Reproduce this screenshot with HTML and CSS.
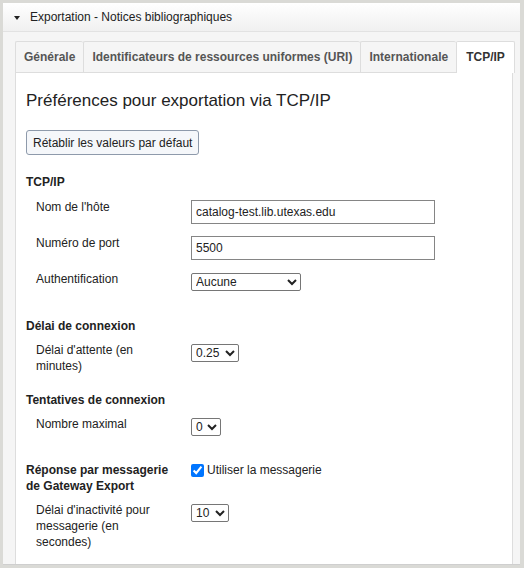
FILE: index.html
```html
<!DOCTYPE html>
<html lang="fr">
<head>
  <meta charset="UTF-8">
  <title>Exportation - Notices bibliographiques</title>
  <link rel="stylesheet" href="styles.css">
</head>
<body>
  <div class="panel">
    <div class="panel-header">
      <span class="caret"></span>
      <span>Exportation - Notices bibliographiques</span>
    </div>

    <div class="panel-body">
      <ul class="tabs">
        <li class="tab">Générale</li>
        <li class="tab">Identificateurs de ressources uniformes (URI)</li>
        <li class="tab">Internationale</li>
        <li class="tab active">TCP/IP</li>
      </ul>

      <div class="tab-content">
        <h2>Préférences pour exportation via TCP/IP</h2>
        <button class="btn">Rétablir les valeurs par défaut</button>

        <!-- TCP/IP -->
        <div class="section first">
          <h3>TCP/IP</h3>
          <div class="row">
            <label>Nom de l'hôte</label>
            <input type="text" class="text-input" value="catalog-test.lib.utexas.edu">
          </div>
          <div class="row">
            <label>Numéro de port</label>
            <input type="text" class="text-input" value="5500">
          </div>
          <div class="row">
            <label>Authentification</label>
            <select class="sel sel-auth"><option>Aucune</option></select>
          </div>
        </div>

        <!-- Délai -->
        <div class="section second">
          <h3>Délai de connexion</h3>
          <div class="row">
            <label>Délai d'attente (en minutes)</label>
            <select class="sel sel-delai"><option>0.25</option></select>
          </div>
        </div>

        <!-- Tentatives -->
        <div class="section">
          <h3>Tentatives de connexion</h3>
          <div class="row">
            <label>Nombre maximal</label>
            <select class="sel sel-max"><option>0</option></select>
          </div>
        </div>

        <!-- Messagerie -->
        <div class="section">
          <div class="head-row">
            <h3>Réponse par messagerie de Gateway Export</h3>
            <label class="check"><input type="checkbox" checked> Utiliser la messagerie</label>
          </div>
          <div class="row">
            <label>Délai d'inactivité pour messagerie (en secondes)</label>
            <select class="sel sel-inact"><option>10</option></select>
          </div>
        </div>
      </div>
    </div>
  </div>
</body>
</html>
```

FILE: styles.css
```css
body {
  margin: 0;
  background: #dadad6;
  font-family: "Liberation Sans", Arial, sans-serif;
  font-size: 12px;
  color: #222;
}
.panel {
  margin: 3px 4px 0 3px;
  height: 561px;
  background: #f5f5f5;
  border-bottom: 1px solid #cfcfcf;
  display: flex;
  flex-direction: column;
}
.panel-header {
  height: 28px;
  display: flex;
  align-items: center;
  gap: 10px;
  padding-left: 11px;
  background: linear-gradient(#ffffff, #f0f0f0);
  border-bottom: 1px solid #e2e2e2;
  color: #222;
}
.caret {
  width: 0;
  height: 0;
  border-left: 3px solid transparent;
  border-right: 3px solid transparent;
  border-top: 4px solid #222;
  margin-top: 2px;
}
.panel-body {
  flex: 1;
  display: flex;
  flex-direction: column;
  padding: 9px 7px 0 12px;
}
.tabs {
  list-style: none;
  margin: 0;
  padding: 0;
  display: flex;
  height: 31px;
}
.tab {
  flex-shrink: 0;
  white-space: nowrap;
  padding: 0 8px;
  line-height: 30px;
  font-weight: bold;
  color: #555;
  background: #f5f5f5;
  border: 1px solid #dddddd;
  border-bottom: none;
  border-right: none;
  border-radius: 2px 2px 0 0;
}
.tab:last-child {
  border-right: 1px solid #dddddd;
}
.tab.active {
  background: #fff;
  color: #333;
  height: 31px;
  position: relative;
  z-index: 1;
  padding: 0 9px;
}
.tab-content {
  flex: 1;
  background: #fff;
  border: 1px solid #dddddd;
  border-bottom: none;
  padding: 17px 10px 0 10px;
}
h2 {
  margin: 0;
  font-size: 17px;
  font-weight: normal;
  line-height: 22px;
  color: #222;
}
.btn {
  margin-top: 18px;
  height: 25px;
  padding: 0 6px;
  font-family: inherit;
  font-size: 12px;
  color: #222;
  background: #f5f7fa;
  border: 1px solid #8e9aab;
  border-radius: 3px;
}
.section {
  margin-top: 18px;
}
.section.first {
  margin-top: 19px;
}
.section.first h3 {
  margin-bottom: 9px;
}
.section.second {
  margin-top: 19px;
}
h3 {
  margin: 0 0 8px;
  font-size: 12px;
  line-height: 16px;
  font-weight: bold;
  width: 150px;
}
.head-row {
  display: grid;
  grid-template-columns: 165px 1fr;
  margin-bottom: 8px;
}
.head-row h3 {
  margin: 0;
}
.check {
  display: flex;
  align-items: center;
  gap: 3px;
  height: 16px;
}
.check input {
  margin: 0;
  width: 13px;
  height: 13px;
}
.row {
  display: grid;
  grid-template-columns: 155px 1fr;
  min-height: 28px;
  margin-left: 10px;
  margin-bottom: 8px;
  align-items: start;
}
.row:last-child {
  margin-bottom: 0;
}
.row label {
  line-height: 16px;
  padding-right: 20px;
}
.text-input {
  width: 244px;
  height: 24px;
  box-sizing: border-box;
  margin-top: 1px;
  padding: 0 4px;
  font-family: inherit;
  font-size: 12px;
  color: #222;
  border: 1px solid #858585;
  border-radius: 0;
}
.sel {
  margin-top: 2px;
  height: 18px;
  font-family: inherit;
  font-size: 12px;
  color: #222;
  border: 1px solid #767676;
  border-radius: 2px;
  background: #fff;
}
.sel-auth { width: 110px; }
.sel-delai { width: 48px; }
.sel-max { width: 30px; }
.sel-inact { width: 38px; }
```
